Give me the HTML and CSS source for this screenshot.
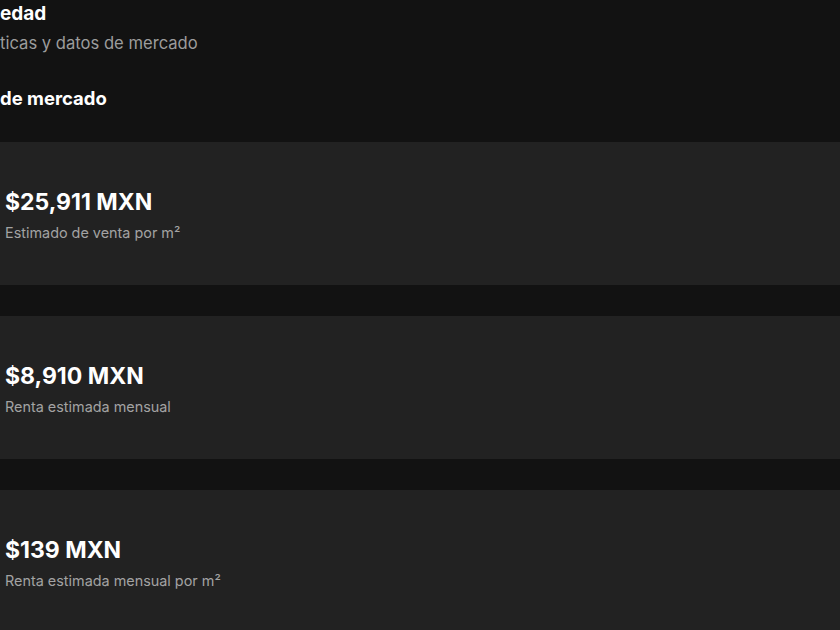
FILE: index.html
```html
<!DOCTYPE html>
<html lang="es">
<head>
<meta charset="utf-8">
<link rel="stylesheet" href="styles.css">
</head>
<body>
<div class="page">
  <header class="head">
    <h1 class="title">edad</h1>
    <p class="sub">ticas y datos de mercado</p>
  </header>
  <h2 class="section">de mercado</h2>
  <div class="cards">
    <div class="card">
      <div class="value">$25,911 MXN</div>
      <div class="label">Estimado de venta por m²</div>
    </div>
    <div class="card">
      <div class="value">$8,910 MXN</div>
      <div class="label">Renta estimada mensual</div>
    </div>
    <div class="card">
      <div class="value">$139 MXN</div>
      <div class="label">Renta estimada mensual por m²</div>
    </div>
  </div>
</div>
</body>
</html>
```
FILE: styles.css
```css
html, body {
  margin: 0;
  padding: 0;
  background: #121212;
  overflow: hidden;
  height: 630px;
}
body {
  font-family: "Inter", "Noto Sans", sans-serif;
  color: #ffffff;
}
.page {
  width: 840px;
  overflow: hidden;
}
.head {
  padding-top: 1px;
}
.title {
  margin: 0;
  font-size: 19px;
  font-weight: 700;
  line-height: 26px;
}
.sub {
  margin: 4px 0 0;
  font-size: 16.6px;
  font-weight: 400;
  color: #9c9c9c;
  line-height: 24px;
}
.section {
  margin: 30px 0 0;
  font-size: 18.5px;
  font-weight: 700;
  line-height: 26px;
}
.cards {
  margin: 31px 0 0;
  display: flex;
  flex-direction: column;
  gap: 31px;
}
.card {
  background: #222222;
  height: 143px;
  padding: 2px 5px 0;
  box-sizing: border-box;
  display: flex;
  flex-direction: column;
  justify-content: center;
  gap: 6px;
}
.value {
  font-size: 23px;
  font-weight: 700;
  line-height: 30px;
}
.label {
  font-size: 14.4px;
  color: #a3a3a3;
  line-height: 20px;
}
```
